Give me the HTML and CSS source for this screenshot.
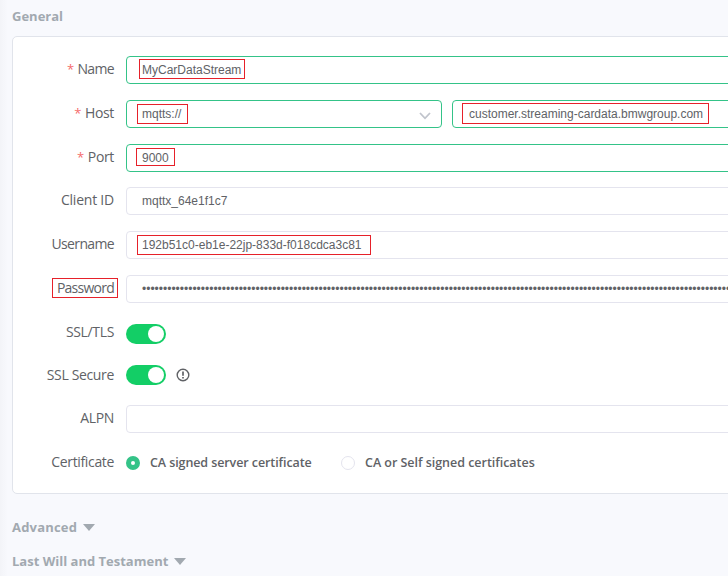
FILE: index.html
```html
<!DOCTYPE html>
<html lang="en">
<head>
<meta charset="utf-8">
<title>Connection settings</title>
<link rel="stylesheet" href="styles.css">
</head>
<body>
<main class="page">
  <h3 class="title"><span>General</span></h3>
  <form class="card">
    <div class="row"><label class="label tight"><i>*</i><span>Name</span></label><div class="field ok"><span>MyCarDataStream</span><b class="mark mark-name"></b></div></div>
    <div class="row"><label class="label"><i>*</i><span>Host</span></label><div class="field ok select"><span>mqtts://</span><svg class="chevron" width="12" height="8" viewBox="0 0 12 8"><path d="M1 1l5 5.3L11 1" fill="none" stroke="#c0c4cc" stroke-width="1.8"/></svg><b class="mark mark-scheme"></b></div><div class="field ok host"><span>customer.streaming-cardata.bmwgroup.com</span><b class="mark mark-host"></b></div></div>
    <div class="row port"><label class="label"><i>*</i><span>Port</span></label><div class="field ok"><span>9000</span><b class="mark mark-port"></b></div></div>
    <div class="row"><label class="label loose"><span>Client ID</span></label><div class="field"><span>mqttx_64e1f1c7</span></div></div>
    <div class="row"><label class="label tight"><span>Username</span></label><div class="field"><span>192b51c0-eb1e-22jp-833d-f018cdca3c81</span><b class="mark mark-user"></b></div></div>
    <div class="row password"><label class="label tighter"><span>Password</span><b class="mark mark-password"></b></label><div class="field"><span>••••••••••••••••••••••••••••••••••••••••••••••••••••••••••••••••••••••••••••••••••••••••••••••••••••••••••••••••••••••••••••••••••••••••••••</span></div></div>
    <div class="row tls"><label class="label"><span>SSL/TLS</span></label><div class="switch"></div></div>
    <div class="row secure"><label class="label"><span>SSL Secure</span></label><div class="switch"></div><svg class="info" width="14" height="14" viewBox="0 0 14 14"><circle cx="7" cy="7" r="5.8" fill="none" stroke="#606266" stroke-width="1.4"/><path d="M7 3.4v4.4M7 9v1.6" stroke="#606266" stroke-width="1.7"/></svg></div>
    <div class="row"><label class="label"><span>ALPN</span></label><div class="field"></div></div>
    <div class="row certificate"><label class="label"><span>Certificate</span></label><div class="radio checked"></div><span class="option first">CA signed server certificate</span><div class="radio"></div><span class="option second">CA or Self signed certificates</span></div>
  </form>
  <h3 class="title advanced"><span>Advanced</span><i class="caret"></i></h3>
  <h3 class="title will"><span>Last Will and Testament</span><i class="caret"></i></h3>
</main>
</body>
</html>
```
FILE: styles.css
```css
* { box-sizing: border-box; }
body { margin: 0; overflow: hidden; background: #f8f9fd; color: #606266; font-family: "Open Sans", "Noto Sans", sans-serif; }
.page { width: 728px; height: 576px; padding: 6px 0 0 12px; overflow: hidden; background: linear-gradient(90deg, #f3f4f8, #f8f9fd 8px); }
.title { display: flex; align-items: center; height: 20px; margin: 0; color: #a2a9b0; font-size: 13px; font-weight: 700; line-height: 20px; white-space: nowrap; }
.card { width: 760px; height: 458px; margin: 10px 0 0; padding: 19px 0 0; border: 1px solid #e1e4eb; border-radius: 5px; background: #fff; }
.row { display: flex; align-items: center; height: 28px; margin-bottom: 16px; }
.row.port { margin-bottom: 15px; }
.row.password { margin-bottom: 17px; }
.row.tls { margin-bottom: 13px; }
.label { position: relative; display: flex; justify-content: flex-end; flex: none; width: 101px; height: 28px; margin-right: 12px; font-size: 14px; line-height: 26px; letter-spacing: -0.35px; white-space: nowrap; }
.label.tight { letter-spacing: -0.65px; }
.label.tighter { letter-spacing: -0.75px; }
.label.loose { letter-spacing: -0.22px; }
.tls .label { line-height: 24px; }
.secure .label { line-height: 28px; }
.label i { margin-right: 4px; color: #f56c6c; font-size: 13px; font-style: normal; }
.field { position: relative; display: flex; align-items: center; flex: 1; min-width: 0; height: 28px; padding: 0 15px; border: 1px solid #e4e4ee; border-radius: 4px; background: #fff; font: 12px/26px "Liberation Sans", Arial, sans-serif; white-space: nowrap; }
.field.ok { border-color: #34c388; }
.field.select { flex: 0 0 316px; justify-content: space-between; padding-right: 10px; }
.field.host { margin-left: 10px; padding-left: 16px; }
.chevron { margin-top: 4px; }
.mark { position: absolute; border: 1px solid #e6212a; }
.mark-name { left: 12px; top: 2px; width: 106px; height: 20px; }
.mark-scheme { left: 10px; top: 3px; width: 51px; height: 20px; }
.mark-host { left: 9px; top: 2px; width: 247px; height: 21px; }
.mark-port { left: 9px; top: 3px; width: 39px; height: 18px; }
.mark-user { left: 10px; top: 3px; width: 234px; height: 20px; }
.mark-password { left: 39px; top: 3px; width: 66px; height: 20px; }
.switch { width: 40px; height: 20px; padding: 2px 1px 2px 22px; border-radius: 10px; background: #13ce66; }
.switch::before { content: ""; display: block; width: 16px; height: 16px; border-radius: 50%; background: #fff; }
.info { margin-left: 10px; }
.radio { flex: none; width: 14px; height: 14px; border: 1px solid #e4e4ee; border-radius: 50%; background: #fff; }
.radio.checked { border: 5px solid #34c388; }
.option { margin-left: 10px; font-size: 12.5px; font-weight: 600; line-height: 26px; white-space: nowrap; }
.option.first { width: 191px; letter-spacing: -0.09px; }
.option.second { letter-spacing: -0.03px; }
.title.advanced { margin-top: 23px; letter-spacing: 0.2px; }
.title.will { margin-top: 14px; }
.caret { width: 0; height: 0; margin-left: 6px; border: 6px solid transparent; border-top: 7px solid #a2a9b0; border-bottom: 0; }
```
